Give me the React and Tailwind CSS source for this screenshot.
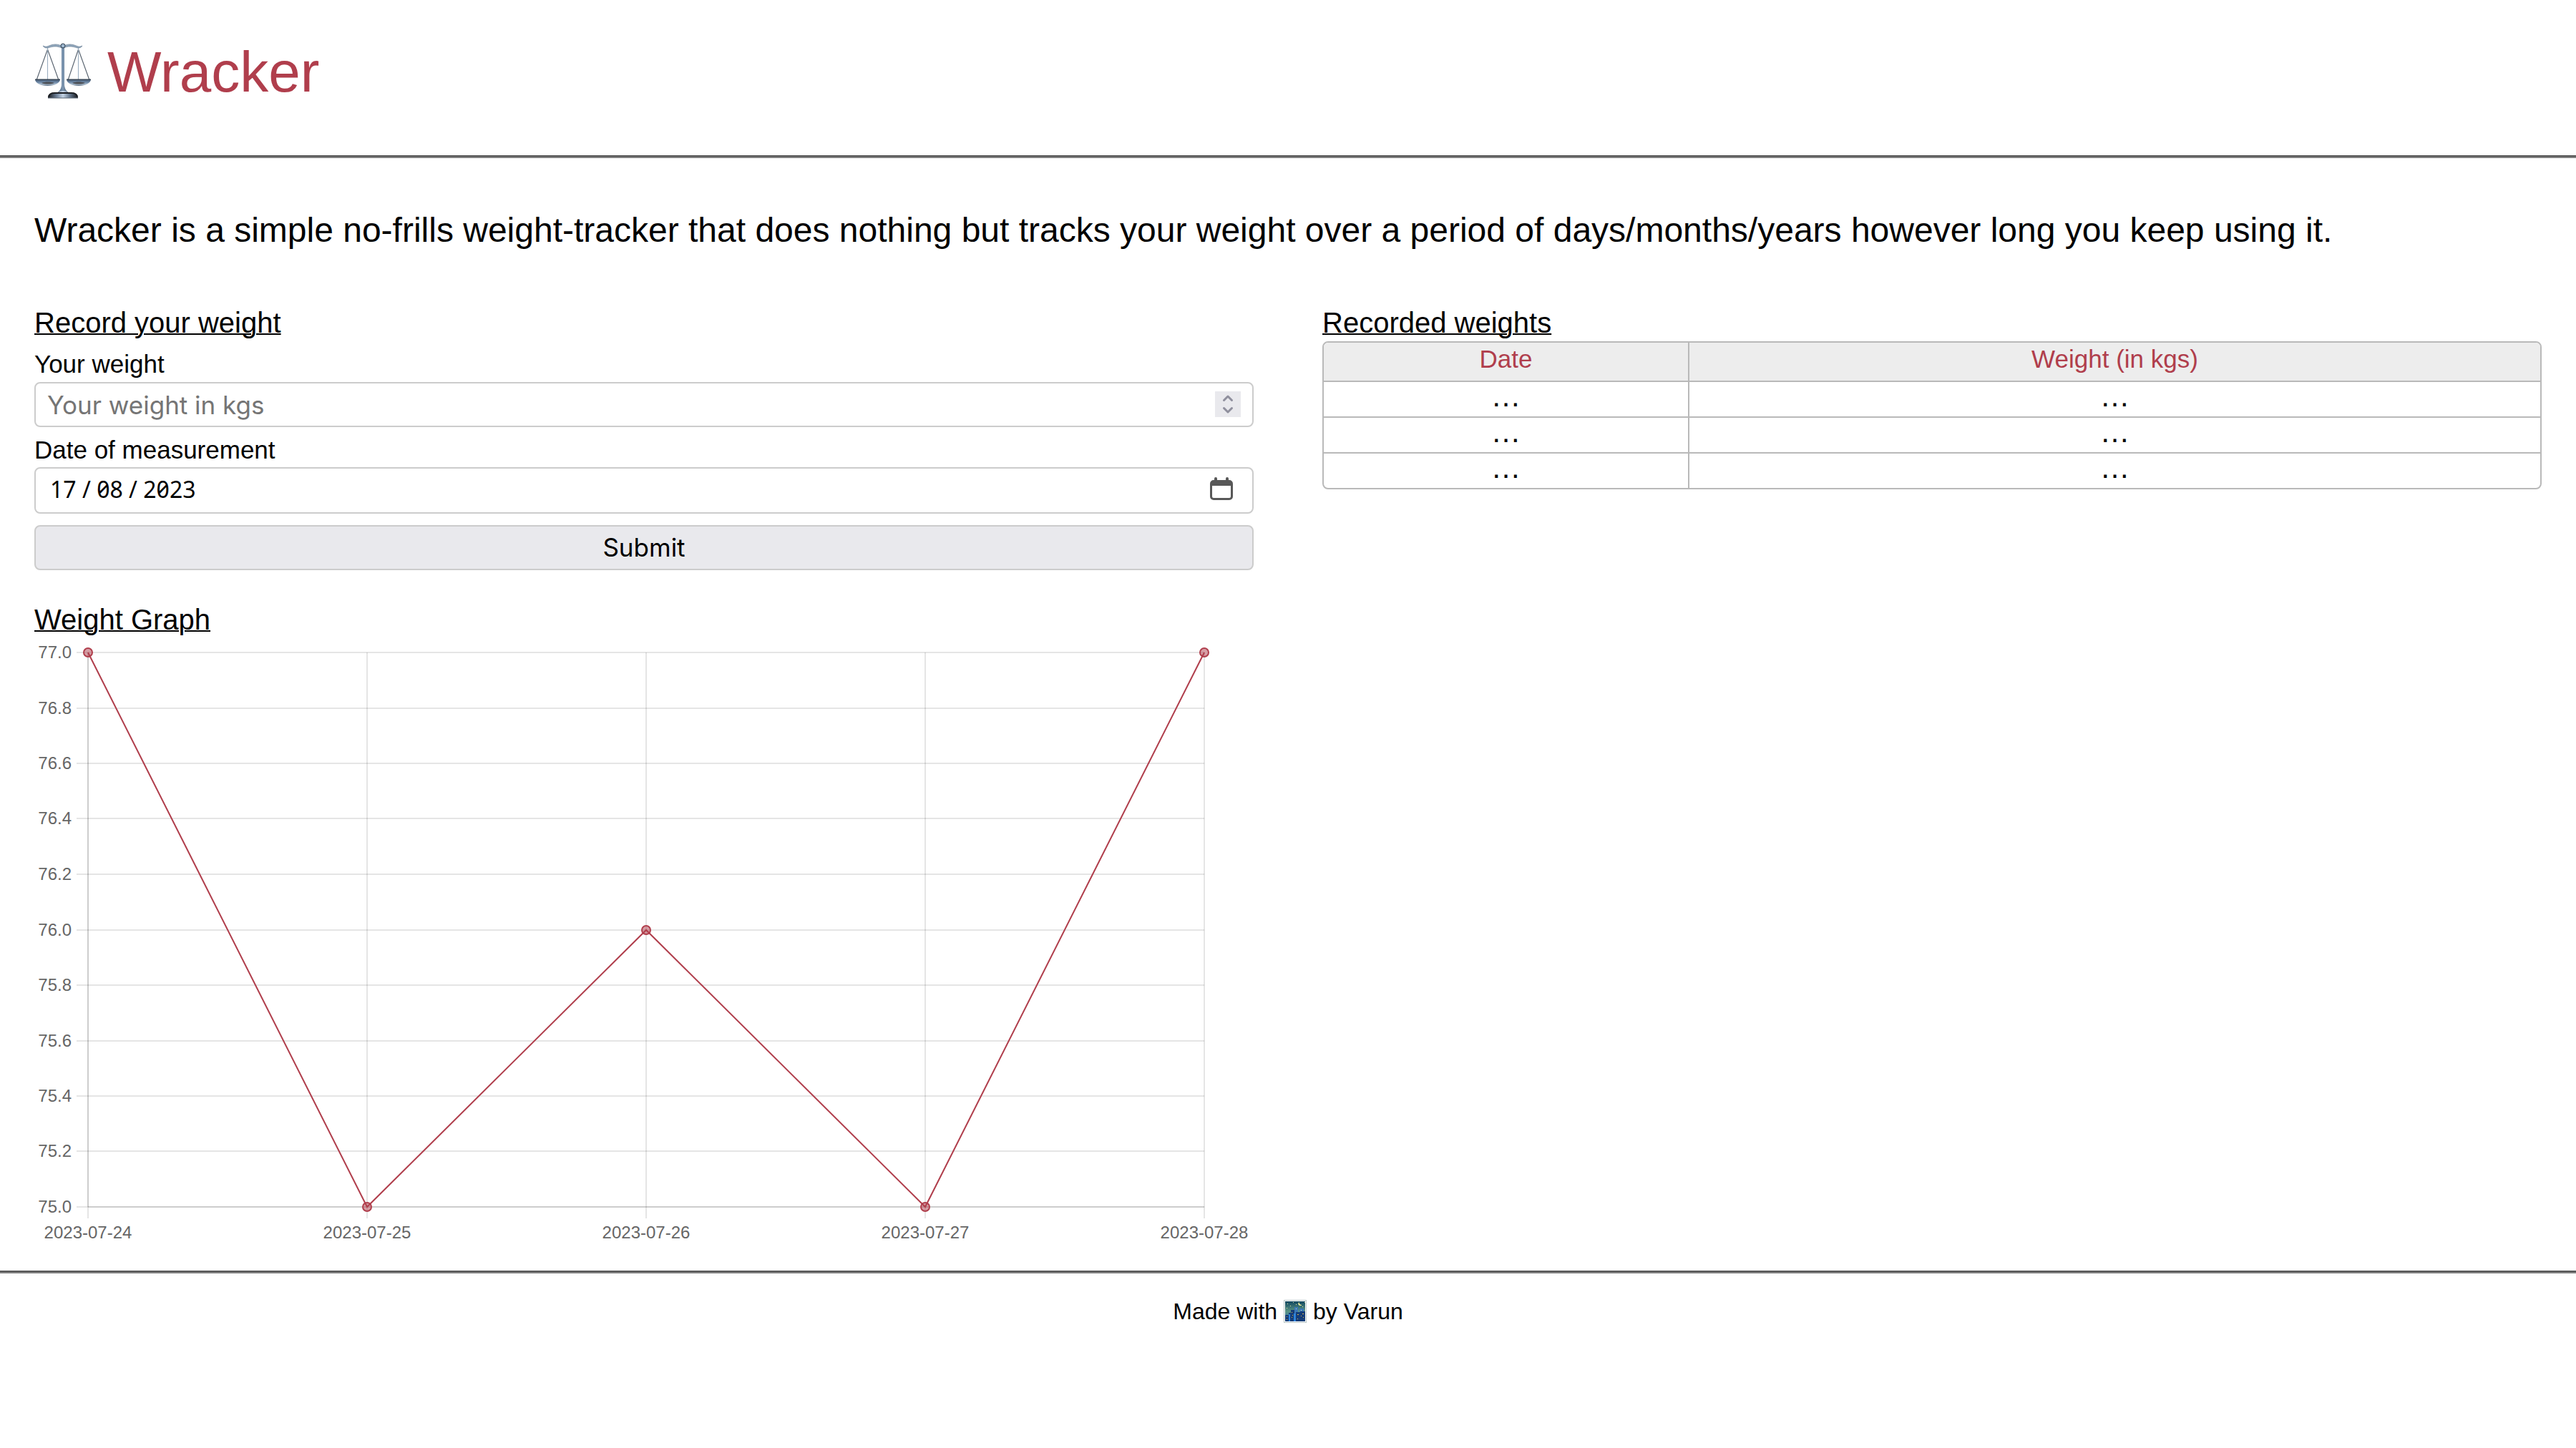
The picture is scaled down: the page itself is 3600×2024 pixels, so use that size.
const RED = '#b03e4c';
const POINTS = [
  { date: '2023-07-24', weight: 77 },
  { date: '2023-07-25', weight: 75 },
  { date: '2023-07-26', weight: 76 },
  { date: '2023-07-27', weight: 75 },
  { date: '2023-07-28', weight: 77 },
];
const TICKS = [77, 76.8, 76.6, 76.4, 76.2, 76, 75.8, 75.6, 75.4, 75.2, 75];

const LEFT = 75;
const RIGHT = 1635;
const TOP = 16;
const BOTTOM = 791;
const xAt = (i) => LEFT + (i * (RIGHT - LEFT)) / (POINTS.length - 1);
const yAt = (v) => Math.round(BOTTOM - ((v - 75) / 2) * (BOTTOM - TOP));

function ScalesIcon() {
  return (
    <svg viewBox="0 0 80 80" className="size-20 shrink-0" role="img" aria-label="Scales">
      <defs>
        <linearGradient id="pole" x1="0" x2="1" y1="0" y2="0">
          <stop offset="0" stopColor="#3d5068" />
          <stop offset="0.5" stopColor="#7f99b4" />
          <stop offset="1" stopColor="#3a4a5e" />
        </linearGradient>
        <linearGradient id="pan" x1="0" x2="0" y1="0" y2="1">
          <stop offset="0" stopColor="#44566c" />
          <stop offset="0.45" stopColor="#6d89a8" />
          <stop offset="0.75" stopColor="#aebfd0" />
          <stop offset="1" stopColor="#55687d" />
        </linearGradient>
        <linearGradient id="base" x1="0" x2="1" y1="0" y2="0">
          <stop offset="0" stopColor="#15181c" />
          <stop offset="0.3" stopColor="#71849c" />
          <stop offset="0.5" stopColor="#c4d3e4" />
          <stop offset="0.72" stopColor="#65788e" />
          <stop offset="1" stopColor="#15181c" />
        </linearGradient>
      </defs>
      <g stroke="#55606c" strokeWidth="1.1" fill="none">
        <path d="M18.5 11 3 54M18.5 11 34 54M61.5 11 47 54M61.5 11 77 54" />
        <path d="M18.5 8V53M61.5 8V53" stroke="#9db0c2" />
      </g>
      <path d="M12 6c3 1.5 5 1.5 8 .2 7-3 12-3 18-.2h3c6-2.8 11-2.8 18 .2 3 1.300 5 1.300 8-.2-1.500 2.600-4 3.400-7 3-8-2.600-13-2.600-19 0h-3c-6-2.600-11-2.600-19 0-3 .4-5.500-.4-7-3z" fill="#8fa5ba" stroke="#667c92" strokeWidth="0.6" />
      <path d="M38 9h4v52c.5 5 3 9 7 11H31c4-2 6.500-6 7-11z" fill="url(#pole)" />
      <circle cx="40" cy="6" r="3" fill="#9eb7cf" stroke="#2f3e4e" strokeWidth="1" />
      <path d="M1 53h35c0 5-8 9-17.500 9S1 58 1 53zM45 53h34c0 5-8 9-17 9s-17-4-17-9z" fill="url(#pan)" />
      <path d="M1 53h35M45 53h34" stroke="#2d3845" strokeWidth="1.2" />
      <path d="M10 58c5-2 13-2 18 0-5 2-13 2-18 0zM53 58c5-2 13-2 18 0-5 2-13 2-18 0z" fill="#4c4f55" />
      <path d="M19 79c0-5 3-7 8-7 5 0 7-1 9-3h8c2 2 4 3 9 3s8 2 8 7z" fill="url(#base)" />
      <path d="M20 77c1-4 4-5 8-5h24c4 0 7 1 8 5" fill="none" stroke="#1c1f23" strokeWidth="2" />
      <path d="M19 79h42" stroke="#5b6775" strokeWidth="1" />
    </svg>
  );
}

function NightCityIcon() {
  return (
    <svg viewBox="0 0 32 32" className="size-8 shrink-0" role="img" aria-label="Night with stars">
      <defs>
        <linearGradient id="sky" x1="0" x2="0" y1="0" y2="1">
          <stop offset="0" stopColor="#10475f" />
          <stop offset="0.5" stopColor="#5c9585" />
          <stop offset="1" stopColor="#2c6fb0" />
        </linearGradient>
      </defs>
      <rect x="0.5" y="0.5" width="31" height="31" fill="#fff" stroke="#b9c6c6" />
      <rect x="2" y="2" width="28" height="28" fill="url(#sky)" />
      <path d="M15 10h5v20h-5zM22 12h6v10h-6z" fill="#3a78b8" />
      <path d="M2 21h5v-3h3v-4h5v16H2zM17 17h6v-1h7v14H17z" fill="#153d78" />
      <path d="M7 20h2v10H7zM14 19h2.500v11H14z" fill="#2b83de" />
      <path d="M11 17h1v1h-1zM4 23h1v1H4zM11 24h1v1h-1zM12 21h1v1h-1zM19 20h2v1h-2zM26 19h2v1h-2zM19 26h1v1h-1zM27 24h1v1h-1zM24 22h1v1h-1zM4 27h1v1H4z" fill="#d8b548" />
      <path d="M5 5h1v1H5zM9 8h1v1H9zM13 3h1v1h-1zM17 6h1v1h-1zM4 11h1v1H4zM17 12h1v1h-1zM24 14h1v1h-1zM26 9h1v1h-1zM29 3h1v1h-1z" fill="#e8e6a0" />
      <path d="M21.500 3c-2 1.500-1.500 5 2 5 1 0 1.500-.5 2-1-2.500 0-4-1.500-4-4z" fill="#f6ee9a" />
    </svg>
  );
}

function CalendarIcon() {
  return (
    <svg viewBox="0 0 32 32" className="block size-8">
      <path d="M6 2a2 2 0 0 1 4 0v2h12V2a2 2 0 0 1 4 0v2h1a5 5 0 0 1 5 5v18a5 5 0 0 1-5 5H5a5 5 0 0 1-5-5V9a5 5 0 0 1 5-5h1zM3 12v15a2 2 0 0 0 2 2h22a2 2 0 0 0 2-2V12z" fill="#585858" fillRule="evenodd" />
    </svg>
  );
}

function SpinArrow({ d }) {
  return (
    <svg viewBox="0 0 36 18" className="block h-[18px] w-9">
      <path d={d} fill="none" stroke="#8f8f9d" strokeWidth="3" strokeLinecap="round" strokeLinejoin="round" />
    </svg>
  );
}

function WeightChart() {
  const line = POINTS.map((p, i) => `${xAt(i)},${yAt(p.weight)}`).join(' ');
  return (
    <svg viewBox="0 0 1704 852" className="block w-full" role="img" aria-label="Weight by date">
      <g stroke="#000" strokeOpacity="0.1" strokeWidth="2">
        {POINTS.map((p, i) => (
          <line key={p.date} x1={xAt(i)} x2={xAt(i)} y1={TOP} y2={BOTTOM + 16} />
        ))}
        {TICKS.map((t) => (
          <line key={t} x1={LEFT - 16} x2={RIGHT} y1={yAt(t)} y2={yAt(t)} />
        ))}
        <line x1={LEFT} x2={LEFT} y1={TOP} y2={BOTTOM} />
        <line x1={LEFT} x2={RIGHT} y1={BOTTOM} y2={BOTTOM} />
      </g>
      <g fill="#666" fontSize="24">
        {TICKS.map((t) => (
          <text key={t} x={LEFT - 23} y={yAt(t) + 8} textAnchor="end">{t.toFixed(1)}</text>
        ))}
        {POINTS.map((p, i) => (
          <text key={p.date} x={xAt(i)} y={BOTTOM + 44} textAnchor="middle">{p.date}</text>
        ))}
      </g>
      <polyline points={line} fill="none" stroke={RED} strokeWidth="2" />
      {POINTS.map((p, i) => (
        <circle key={p.date} cx={xAt(i)} cy={yAt(p.weight)} r="6" fill={RED} fillOpacity="0.5" stroke={RED} strokeWidth="2" />
      ))}
    </svg>
  );
}

export default function App() {
  return (
    <div className="min-h-screen bg-white font-['Liberation_Sans',Arial,sans-serif] text-black">
      <header className="flex items-center gap-[22px] px-12 pt-[47px] pb-[68px]">
        <ScalesIcon />
        <h1 className="pt-[6px] text-[80px] leading-24 text-[#b03e4c]">Wracker</h1>
      </header>
      <hr className="h-1 border-t-2 border-b-2 border-t-[#555] border-b-[#808080]" />

      <main className="px-12">
        <p className="pt-[73px] text-[48px] leading-14">
          Wracker is a simple no-frills weight-tracker that does nothing but tracks your weight over a period of days/months/years however long you keep using it.
        </p>

        <div className="grid grid-cols-2 items-start gap-x-24 pt-[77px]">
          <section>
            <h2 className="pb-[2px] text-[40px] leading-12 underline decoration-2">Record your weight</h2>
            <form className="flex flex-col" onSubmit={(e) => e.preventDefault()}>
              <label htmlFor="weight" className="pt-3 text-[35px] leading-10">Your weight</label>
              <div className="relative mt-[5px]">
                <input
                  id="weight"
                  type="number"
                  placeholder="Your weight in kgs"
                  className="block h-[63px] w-full rounded-lg border-2 border-[#ccc] px-4 font-['Inter',sans-serif] text-[35px] [appearance:textfield] placeholder:text-[#757575]"
                />
                <div className="absolute top-[13px] right-[18px] flex flex-col bg-[#e9e9ed]">
                  <button type="button" aria-label="Increase"><SpinArrow d="M12.500 12.500 18 7l5.500 5.500" /></button>
                  <button type="button" aria-label="Decrease"><SpinArrow d="M12.500 5.500 18 11l5.500-5.500" /></button>
                </div>
              </div>
              <label htmlFor="date" className="pt-3 text-[35px] leading-10">Date of measurement</label>
              <div className="relative mt-1">
                <input
                  id="date"
                  type="text"
                  defaultValue="17 / 08 / 2023"
                  className="block h-[65px] w-full rounded-lg border-2 border-[#ccc] px-5 pb-1 font-['Noto_Sans',sans-serif] text-[32px] slashed-zero"
                />
                <button type="button" aria-label="Open calendar" className="absolute top-[14px] right-[29px]">
                  <CalendarIcon />
                </button>
              </div>
              <button type="submit" className="mt-4 h-[63px] rounded-lg border-2 border-[#ccc] bg-[#e9e9ed] font-['Inter',sans-serif] text-[35px]">
                Submit
              </button>
            </form>

            <h2 className="pt-[45px] text-[40px] leading-12 underline decoration-2">Weight Graph</h2>
            <div className="pt-[6px]">
              <WeightChart />
            </div>
          </section>

          <section>
            <h2 className="pb-[2px] text-[40px] leading-12 underline decoration-2">Recorded weights</h2>
            <div className="overflow-hidden rounded-lg border-2 border-[#b9b9b9]">
              <table className="w-full table-fixed border-collapse text-center">
                <thead>
                  <tr className="h-[54px] bg-[#ededed] text-[35px] leading-10 text-[#b03e4c]">
                    <th scope="col" className="w-[30%] border-r-2 border-[#b9b9b9] pb-[7px] font-normal">Date</th>
                    <th scope="col" className="pb-[7px] font-normal">Weight (in kgs)</th>
                  </tr>
                </thead>
                <tbody>
                  {[0, 1, 2].map((row) => (
                    <tr key={row} className="border-t-2 border-[#b9b9b9] text-[42px] leading-10">
                      <td className="border-r-2 border-[#b9b9b9] pb-2">…</td>
                      <td className="pb-2">…</td>
                    </tr>
                  ))}
                </tbody>
              </table>
            </div>
          </section>
        </div>
      </main>

      <hr className="mt-7 h-1 border-t-2 border-b-2 border-t-[#555] border-b-[#808080]" />
      <footer className="flex items-center justify-center gap-[9px] pt-[33px] text-[32px] leading-10">
        <span>Made with</span>
        <NightCityIcon />
        <span>by Varun</span>
      </footer>
    </div>
  );
}
